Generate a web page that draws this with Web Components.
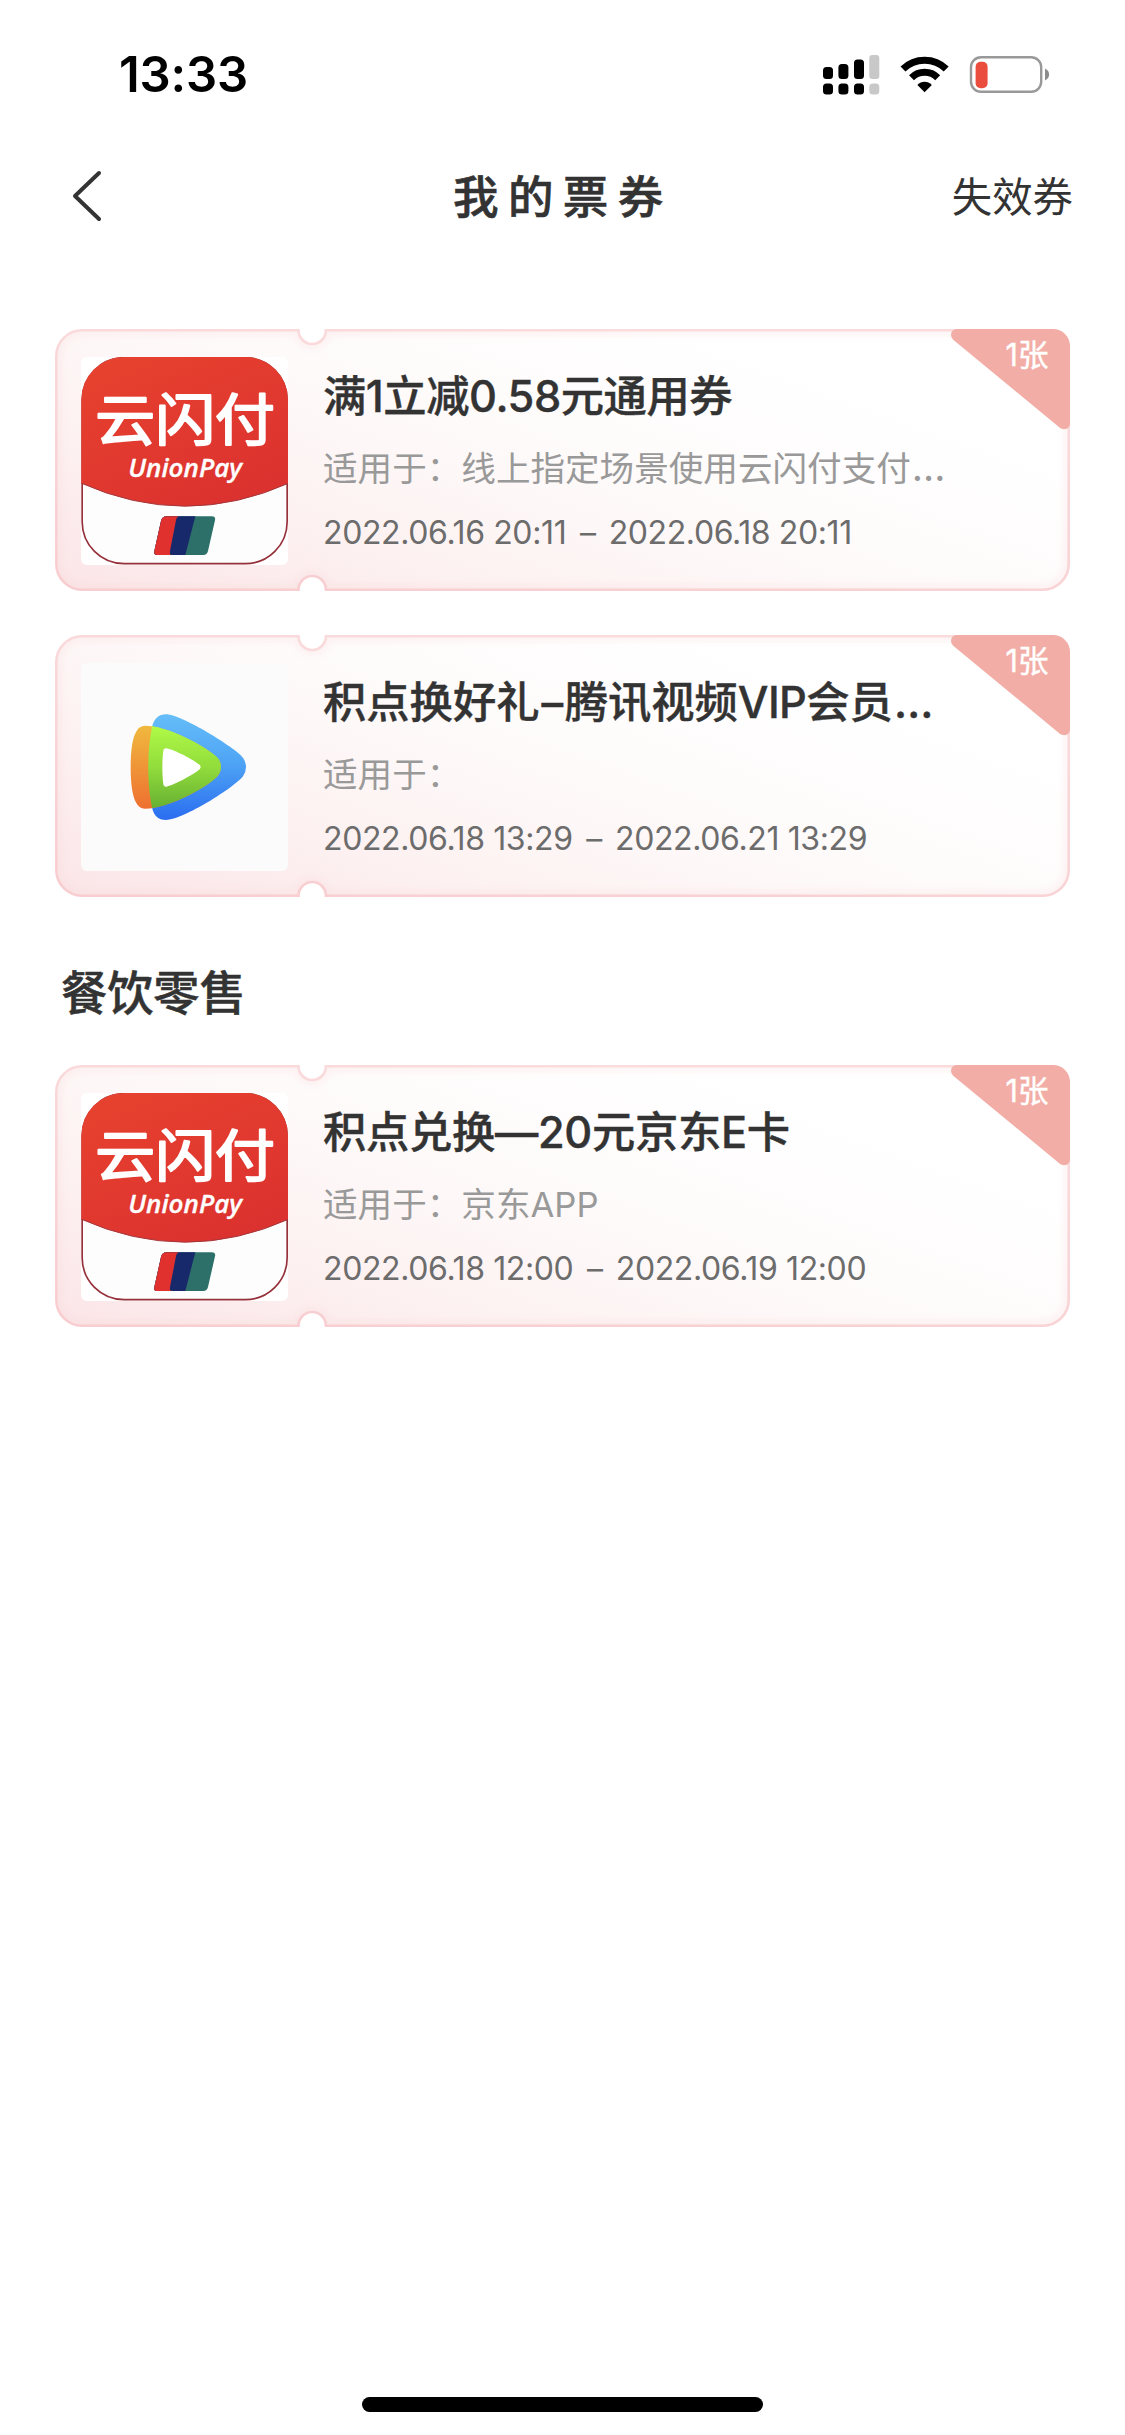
<!DOCTYPE html>
<html lang="zh-CN">
<head>
<meta charset="utf-8">
<title>我的票券</title>
<style>
  html, body { margin: 0; background: #fff; }
  body { font-family: Inter, "Noto Sans CJK SC", sans-serif; color: #333; }
  coupon-card + coupon-card { margin-top: 44px; }
  .dash { padding: 0 4.500px 0 5px; }
  .join { padding: 0 1.500px 0 2px; }
  .dots { font-size: 39px; line-height: 1; padding-left: 1px; }
</style>
</head>
<body>
<coupon-app>
  <status-bar slot="top" time="13:33"></status-bar>
  <nav-bar slot="top"><span>我的票券</span><span slot="action">失效券</span></nav-bar>
  <coupon-card>
    <unionpay-logo slot="logo"></unionpay-logo>
    <span slot="title" style="letter-spacing:-.45px">满1立减0.58元通用券</span>
    <span slot="scope">适用于：线上指定场景使用云闪付支付<span class="dots">…</span></span>
    <span slot="date">2022.06.16 20:11 <span class="dash">–</span> 2022.06.18 20:11</span>
    <span slot="count">1张</span>
  </coupon-card>
  <coupon-card>
    <video-logo slot="logo"></video-logo>
    <span slot="title">积点换好礼<span class="join">–</span>腾讯视频<span style="letter-spacing:-.6px">VIP</span>会员<span style="padding-left:1px;letter-spacing:1px">…</span></span>
    <span slot="scope">适用于：</span>
    <span slot="date">2022.06.18 13:29 <span class="dash">–</span> 2022.06.21 13:29</span>
    <span slot="count">1张</span>
  </coupon-card>
  <section-title>餐饮零售</section-title>
  <coupon-card>
    <unionpay-logo slot="logo"></unionpay-logo>
    <span slot="title" style="letter-spacing:-.3px">积点兑换—20元京东E卡</span>
    <span slot="scope">适用于：京东APP</span>
    <span slot="date">2022.06.18 12:00 <span class="dash">–</span> 2022.06.19 12:00</span>
    <span slot="count">1张</span>
  </coupon-card>
</coupon-app>
<script>
const define = (name, html) => customElements.define(name, class extends HTMLElement {
  constructor() {
    super();
    this.attachShadow({ mode: 'open' }).innerHTML = html;
  }
  connectedCallback() {
    const t = this.shadowRoot.querySelector('[data-time]');
    if (t) t.textContent = this.getAttribute('time');
  }
});

define('coupon-app', `
<style>
  :host { display: flex; flex-direction: column; width: 1125px; height: 2435px; background: #fff; overflow: hidden; }
  main { flex: 1; display: flex; flex-direction: column; padding: 86px 55px 0; }
  footer { display: flex; justify-content: center; padding-bottom: 23px; }
  footer i { width: 401px; height: 15px; border-radius: 8px; background: #000; }
</style>
<slot name="top"></slot>
<main><slot></slot></main>
<footer><i></i></footer>`);

define('status-bar', `
<style>
  :host { display: flex; align-items: center; justify-content: space-between; height: 149px; padding: 0 75px 0 119px; box-sizing: border-box; }
  time { padding-top: 1px; font: 600 49px/60px Inter, sans-serif; letter-spacing: -.2px; color: #000; }
  div { display: flex; align-items: center; padding-bottom: 1px; }
</style>
<time data-time></time>
<div>
  <svg width="227" height="44" viewBox="823 52 227 44">
    <g fill="#000">
      <rect x="823" y="67" width="10" height="12" rx="3.5"/><rect x="838.4" y="64" width="10" height="15" rx="3.5"/><rect x="854" y="59.6" width="10" height="19.4" rx="3.5"/>
      <rect x="823" y="83.6" width="10" height="10.8" rx="3.5"/><rect x="838.4" y="83.6" width="10" height="10.8" rx="3.5"/><rect x="854" y="83.6" width="10" height="10.8" rx="3.5"/>
    </g>
    <g fill="#c8c8c8"><rect x="869.3" y="55" width="10" height="24" rx="3"/><rect x="869.3" y="83.6" width="10" height="10.8" rx="3.5"/></g>
    <path d="M903 68.900A31 31 0 0 1 946.200 68.900M911.500 77.800A18.500 18.500 0 0 1 937.700 77.800" fill="none" stroke="#000" stroke-width="7"/>
    <path d="M924.600 92.300l-7.200-7.300c4-4.300 10.400-4.300 14.400 0z" fill="#000"/>
    <rect x="971" y="57.200" width="70.200" height="34.600" rx="10" fill="none" stroke="#999" stroke-width="2.400"/>
    <rect x="975.600" y="61.700" width="12" height="26.500" rx="5" fill="#ea4d3d"/>
    <path d="M1045 68.500c5.500 2.600 5.500 9.400 0 12z" fill="#8c8c8c"/>
  </svg>
</div>`);

define('nav-bar', `
<style>
  :host { display: flex; align-items: center; height: 94px; padding: 0 52px 0 70px; box-sizing: border-box; color: #333; }
  h1 { margin: 0 auto 0 349px; padding-bottom: 5px; font: 500 45.500px/60px "Noto Sans CJK SC", sans-serif; letter-spacing: 9.400px; -webkit-text-stroke: .6px #333; }
  a { padding-bottom: 3px; font: 400 40.400px/60px "Noto Sans CJK SC", sans-serif; }
  svg { display: block; }
</style>
<svg width="34" height="56" viewBox="70 168 34 56"><path d="M99 173L75 196L99 219" fill="none" stroke="#333" stroke-width="4" stroke-linecap="round" stroke-linejoin="round"/></svg>
<h1><slot></slot></h1>
<a><slot name="action"></slot></a>`);

define('section-title', `
<style>
  :host { display: block; padding: 66px 6px 42px; font: 500 46.200px/60px Inter, "Noto Sans CJK SC", sans-serif; color: #333; -webkit-text-stroke: .5px #333; }
</style>
<slot></slot>`);

define('coupon-card', `
<style>
  :host { display: grid; width: 1015px; height: 262px; flex: none; }
  .shape, .body, .badge { grid-area: 1 / 1; }
  .shape { display: block; overflow: visible; }
  .body { display: flex; align-items: flex-start; padding: 27.500px 0 0 26px; gap: 35px; }
  .logo { display: block; flex: none; width: 207px; height: 208px; border-radius: 6px; overflow: hidden; }
  .text { display: flex; flex-direction: column; padding-top: 9px; white-space: nowrap; }
  .title { font-weight: 500; font-size: 43.300px; line-height: 60px; color: #333; -webkit-text-stroke: .4px #333; }
  .scope { margin-top: 17px; height: 50px; font-size: 34.600px; line-height: 50px; color: #999; }
  .date { margin-top: 17px; font-weight: 400; font-size: 32px; line-height: 46px; letter-spacing: -.38px; color: #6c6c6c; }
  .badge { justify-self: end; display: grid; width: 119px; height: 101px; z-index: 1; }
  .badge svg, .badge span { grid-area: 1 / 1; }
  .badge span { justify-self: end; padding: 4px 21.500px 0 0; font-size: 30.500px; line-height: 44px; color: #fff; -webkit-text-stroke: .4px #fff; }
</style>
<svg class="shape" width="1015" height="262" viewBox="0 0 1015 262">
  <defs>
    <linearGradient id="g" gradientUnits="userSpaceOnUse" x1="0" y1="262" x2="202" y2="-293">
      <stop offset="0" stop-color="#fbe5e7"/><stop offset=".25" stop-color="#fdf1f1"/><stop offset=".5" stop-color="#fefafa"/><stop offset=".78" stop-color="#fff"/>
    </linearGradient>
    <linearGradient id="s" x1="0" y1="1" x2=".5" y2="0"><stop offset="0" stop-color="#f8cdd0"/><stop offset="1" stop-color="#fadcdd"/></linearGradient>
    <path id="p" d="M27 1.300H243.500A13.700 13.700 0 0 0 270.900 1.300H988A25.700 25.700 0 0 1 1013.700 27V235A25.700 25.700 0 0 1 988 260.700H270.900A13.700 13.700 0 0 0 243.500 260.700H27A25.700 25.700 0 0 1 1.300 235V27A25.700 25.700 0 0 1 27 1.300Z"/>
    <clipPath id="c"><use href="#p"/></clipPath>
    <filter id="b" x="-5%" y="-10%" width="110%" height="120%"><feGaussianBlur stdDeviation="4"/></filter>
  </defs>
  <use href="#p" fill="url(#g)"/>
  <g clip-path="url(#c)"><use href="#p" fill="none" stroke="#f9d5d7" stroke-width="8" opacity=".35" filter="url(#b)"/></g>
  <use href="#p" fill="none" stroke="url(#s)" stroke-width="2.600"/>
</svg>
<div class="body">
  <div class="logo"><slot name="logo"></slot></div>
  <div class="text">
    <div class="title"><slot name="title"></slot></div>
    <div class="scope"><slot name="scope"></slot></div>
    <div class="date"><slot name="date"></slot></div>
  </div>
</div>
<div class="badge">
  <svg width="119" height="101" viewBox="0 0 119 101"><path d="M6 0H102A17 17 0 0 1 119 17V94C119 100 113 102 108.500 98.500L2.500 11C-2 7 0 0 6 0Z" fill="#f2ada6"/></svg>
  <span><slot name="count"></slot></span>
</div>`);

define('unionpay-logo', `
<style>:host { display: block; -webkit-text-stroke: 0; } svg { display: block; }</style>
<svg width="207" height="208" viewBox="123 140 621 624">
  <defs>
    <linearGradient id="r" x1="0" y1="0" x2=".6" y2="1"><stop offset="0" stop-color="#e8432f"/><stop offset="1" stop-color="#dc322f"/></linearGradient>
    <clipPath id="k"><rect x="124" y="140" width="620" height="622" rx="128"/></clipPath>
  </defs>
  <rect x="123" y="140" width="621" height="624" fill="#fff"/>
  <rect x="126.500" y="142" width="615" height="618" rx="126" fill="#fdfdfe" stroke="#96303a" stroke-width="5"/>
  <g clip-path="url(#k)">
    <path d="M120 130H750V517Q435 658 120 517Z" fill="url(#r)" stroke="#a5363a" stroke-width="3"/>
  </g>
  <g fill="#fff" stroke="#fff" stroke-linejoin="round">
    <text x="166" y="388" font-family="Liberation Sans, Noto Sans CJK SC, sans-serif" font-size="166" textLength="539" lengthAdjust="spacingAndGlyphs" stroke-width="6">云闪付</text>
    <text x="265" y="500" font-family="Open Sans, sans-serif" font-size="76" font-style="italic" font-weight="600" textLength="341" lengthAdjust="spacingAndGlyphs" stroke-width="1">UnionPay</text>
  </g>
  <path d="M380 618H515Q528 618 525 630L504 722Q501 734 490 734H352Q340 734 343 722L363 632Q366 618 380 618Z" fill="#2d7069"/>
  <path d="M380 618H466L436 734H352Q340 734 343 722L363 632Q366 618 380 618Z" fill="#17296b"/>
  <path d="M380 618H418Q410 619 408 630L390 722Q388 734 395 734H352Q340 734 343 722L363 632Q366 618 380 618Z" fill="#e0312f"/>
</svg>`);

define('video-logo', `
<style>:host { display: block; } svg { display: block; }</style>
<svg width="207" height="208" viewBox="123 127 621 624">
  <defs>
    <linearGradient id="bl" x1="0" y1="0" x2="0" y2="1"><stop offset="0" stop-color="#65bdf8"/><stop offset=".45" stop-color="#4fa5f5"/><stop offset="1" stop-color="#2a6df0"/></linearGradient>
    <linearGradient id="or" x1="0" y1="0" x2="0" y2="1"><stop offset="0" stop-color="#f0b93e"/><stop offset="1" stop-color="#ee7030"/></linearGradient>
    <linearGradient id="gr" x1="0" y1="0" x2="0" y2="1"><stop offset="0" stop-color="#b0fa48"/><stop offset=".5" stop-color="#92dc3c"/><stop offset="1" stop-color="#66b033"/></linearGradient>
    <path id="B" d="M378 281C425 281 588 383 609 411Q627 439 609 467C586 498 430 598 378 598Q343 598 336 560C321 490 321 390 336 319Q345 281 378 281Z"/>
    <path id="O" d="M315 315C385 315 513 385 536 416Q550 439 536 462C511 495 385 564 315 564C285 564 272 520 272 439C272 360 285 315 315 315Z"/>
    <clipPath id="k"><use href="#B"/></clipPath>
  </defs>
  <rect x="123" y="127" width="621" height="624" fill="#fbfbfb"/>
  <use href="#B" fill="url(#bl)"/>
  <use href="#O" fill="url(#or)"/>
  <g clip-path="url(#k)"><use href="#O" fill="url(#gr)"/></g>
  <path d="M380 383C405 388 465 420 479 433Q485 439 479 446C460 462 405 492 380 498Q371 499 370 490C366 460 366 420 370 391Q371 382 380 383Z" fill="#fff"/>
</svg>`);
</script>
</body>
</html>
